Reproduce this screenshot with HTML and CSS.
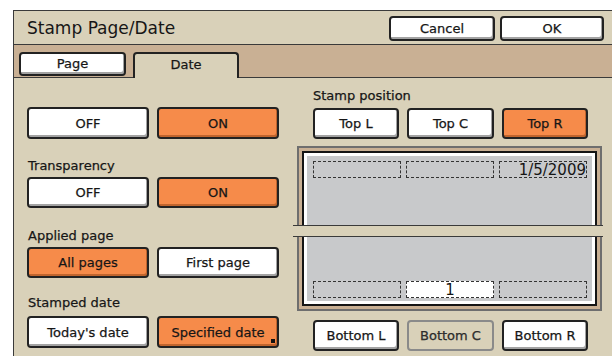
FILE: index.html
```html
<!DOCTYPE html>
<html lang="en">
<head>
  <meta charset="UTF-8">
  <title>Stamp Page/Date</title>
  <link rel="stylesheet" href="styles.css">
</head>
<body>

<div class="dialog">
  <div class="titlebar">
    <span class="title">Stamp Page/Date</span>
    <div class="actions">
      <button class="btn cancel">Cancel</button>
      <button class="btn ok">OK</button>
    </div>
  </div>

  <div class="tabs">
    <div class="tab">Page</div>
    <div class="tab active">Date</div>
  </div>

  <div class="content">
    <div class="left">
      <div class="pair">
        <button class="btn">OFF</button>
        <button class="btn on">ON</button>
      </div>

      <div class="group g-transp">
        <div class="label">Transparency</div>
        <div class="pair">
          <button class="btn">OFF</button>
          <button class="btn on">ON</button>
        </div>
      </div>

      <div class="group g-applied">
        <div class="label">Applied page</div>
        <div class="pair">
          <button class="btn on">All pages</button>
          <button class="btn">First page</button>
        </div>
      </div>

      <div class="group g-stamped">
        <div class="label">Stamped date</div>
        <div class="pair">
          <button class="btn">Today's date</button>
          <button class="btn on marked">Specified date<span class="mark"></span></button>
        </div>
      </div>
    </div>

    <div class="right">
      <div class="label pos-label">Stamp position</div>
      <div class="pos-row">
        <button class="btn">Top L</button>
        <button class="btn">Top C</button>
        <button class="btn on">Top R</button>
      </div>

      <div class="preview">
        <div class="frame">
          <div class="paper">
            <div class="slots">
              <div class="slot"></div>
              <div class="slot"></div>
              <div class="slot date">1/5/2009</div>
            </div>
            <div class="slots">
              <div class="slot"></div>
              <div class="slot num">1</div>
              <div class="slot"></div>
            </div>
          </div>
        </div>
        <div class="break"></div>
      </div>

      <div class="pos-row bottom-row">
        <button class="btn">Bottom L</button>
        <button class="btn disabled">Bottom C</button>
        <button class="btn">Bottom R</button>
      </div>
    </div>
  </div>
</div>

</body>
</html>
```

FILE: styles.css
```css
/* Stamp dialog, panel look */
body {
  margin: 0;
  background: #fff;
  font-family: "DejaVu Sans", Verdana, sans-serif;
  color: #161616;
  -webkit-text-stroke: 0.25px #161616;
}

.dialog {
  margin: 10px 0 0 13px;
  width: 599px;
  height: 346px;
  box-sizing: border-box;
  border-top: 1px solid #3a3a3a;
  border-left: 1px solid #3a3a3a;
  background: #d9d1b9;
  display: flex;
  flex-direction: column;
}

.titlebar {
  height: 34px;
  box-sizing: border-box;
  border-bottom: 1px solid #3a3a3a;
  display: flex;
  align-items: center;
  padding: 0 8px 0 13px;
}

.title {
  font-size: 17px;
  flex: 1;
  padding-top: 1px;
  -webkit-text-stroke: 0;
}

.actions {
  display: flex;
  gap: 5px;
  padding-top: 1px;
}

.btn {
  font-family: inherit;
  font-size: 13px;
  color: #161616;
  background: #fff;
  border: 2px solid #222;
  border-radius: 4px;
  box-shadow: inset -1px -2px 0 #a3a3a3;
  padding: 0;
  height: 32px;
  cursor: pointer;
}

.btn.on {
  background: #f68b4a;
  box-shadow: inset -1px -2px 0 #c0652e;
}

.btn.disabled {
  background: #d9d1b9;
  border-color: #8a8a8a;
  box-shadow: none;
  color: #333;
}

.cancel { width: 106px; height: 25px; }
.ok { width: 104px; height: 25px; }

/* tab strip */
.tabs {
  height: 33px;
  box-sizing: border-box;
  background: #c9b094;
  border-bottom: 1px solid #3a3a3a;
  display: flex;
  align-items: flex-end;
  gap: 7px;
  padding-left: 5px;
}

.tab {
  width: 107px;
  height: 24px;
  box-sizing: border-box;
  margin-bottom: 1px;
  background: #fff;
  border: 2px solid #222;
  border-radius: 4px;
  box-shadow: inset -1px -2px 0 #a3a3a3;
  font-size: 13px;
  text-align: center;
  line-height: 20px;
}

.tab.active {
  width: 106px;
  height: 26px;
  margin-bottom: -1px;
  background: #d9d1b9;
  border-bottom: none;
  border-radius: 4px 4px 0 0;
  box-shadow: none;
  line-height: 21px;
}

.content {
  flex: 1;
  display: flex;
}

.left {
  width: 252px;
  padding: 29px 0 0 13px;
}

.pair {
  display: grid;
  grid-template-columns: 122px 122px;
  gap: 8px;
}

.label {
  font-size: 13px;
  height: 18px;
  line-height: 18px;
  padding-left: 1px;
}

.group .pair { margin-top: 2px; }
.g-transp { margin-top: 18px; }
.g-transp .pair .btn { height: 31px; }
.g-applied { margin-top: 19px; }
.g-applied .pair .btn { height: 31px; }
.g-stamped { margin-top: 16px; }
.g-stamped .pair { margin-top: 4px; }

.marked { position: relative; }

.mark {
  position: absolute;
  right: 2px;
  bottom: 3px;
  width: 4px;
  height: 4px;
  background: #111;
}

.right {
  width: 305px;
  margin-left: 18px;
  padding-top: 9px;
}

.pos-label { padding-left: 16px; }

.pos-row {
  display: grid;
  grid-template-columns: 86px 87px 86px;
  gap: 8px;
  padding-left: 16px;
  margin-top: 3px;
}

.pos-row .btn { height: 31px; }

.bottom-row { margin-top: 9px; }

/* page preview */
.preview {
  position: relative;
  margin-top: 7px;
}

.frame {
  height: 165px;
  box-sizing: border-box;
  border: 2px solid #6e6e6e;
  background: #c9b094;
  padding: 3px;
}

.paper {
  height: 100%;
  box-sizing: border-box;
  border: 2px solid #151515;
  background: #fff;
  padding: 3px;
  display: flex;
  flex-direction: column;
  justify-content: space-between;
}

.slots {
  display: grid;
  grid-template-columns: 88px 88px 88px;
  gap: 5px;
  background: #c8c9cb;
  padding: 5px 5px 0 6px;
}

.slots + .slots {
  flex: 1;
  align-content: end;
  padding: 0 5px 3px 6px;
}

.slot {
  height: 17px;
  box-sizing: border-box;
  border: 1px dashed #333;
  font-size: 15px;
  line-height: 16px;
  -webkit-text-stroke: 0;
}

.slot.date { text-align: right; }

.slot.num {
  background: #fff;
  text-align: center;
}

.break {
  position: absolute;
  top: 79px;
  left: -4px;
  width: 310px;
  height: 10px;
  background: #d9d1b9;
  border-top: 1px solid #3a3a3a;
  border-bottom: 1px solid #3a3a3a;
}
```
